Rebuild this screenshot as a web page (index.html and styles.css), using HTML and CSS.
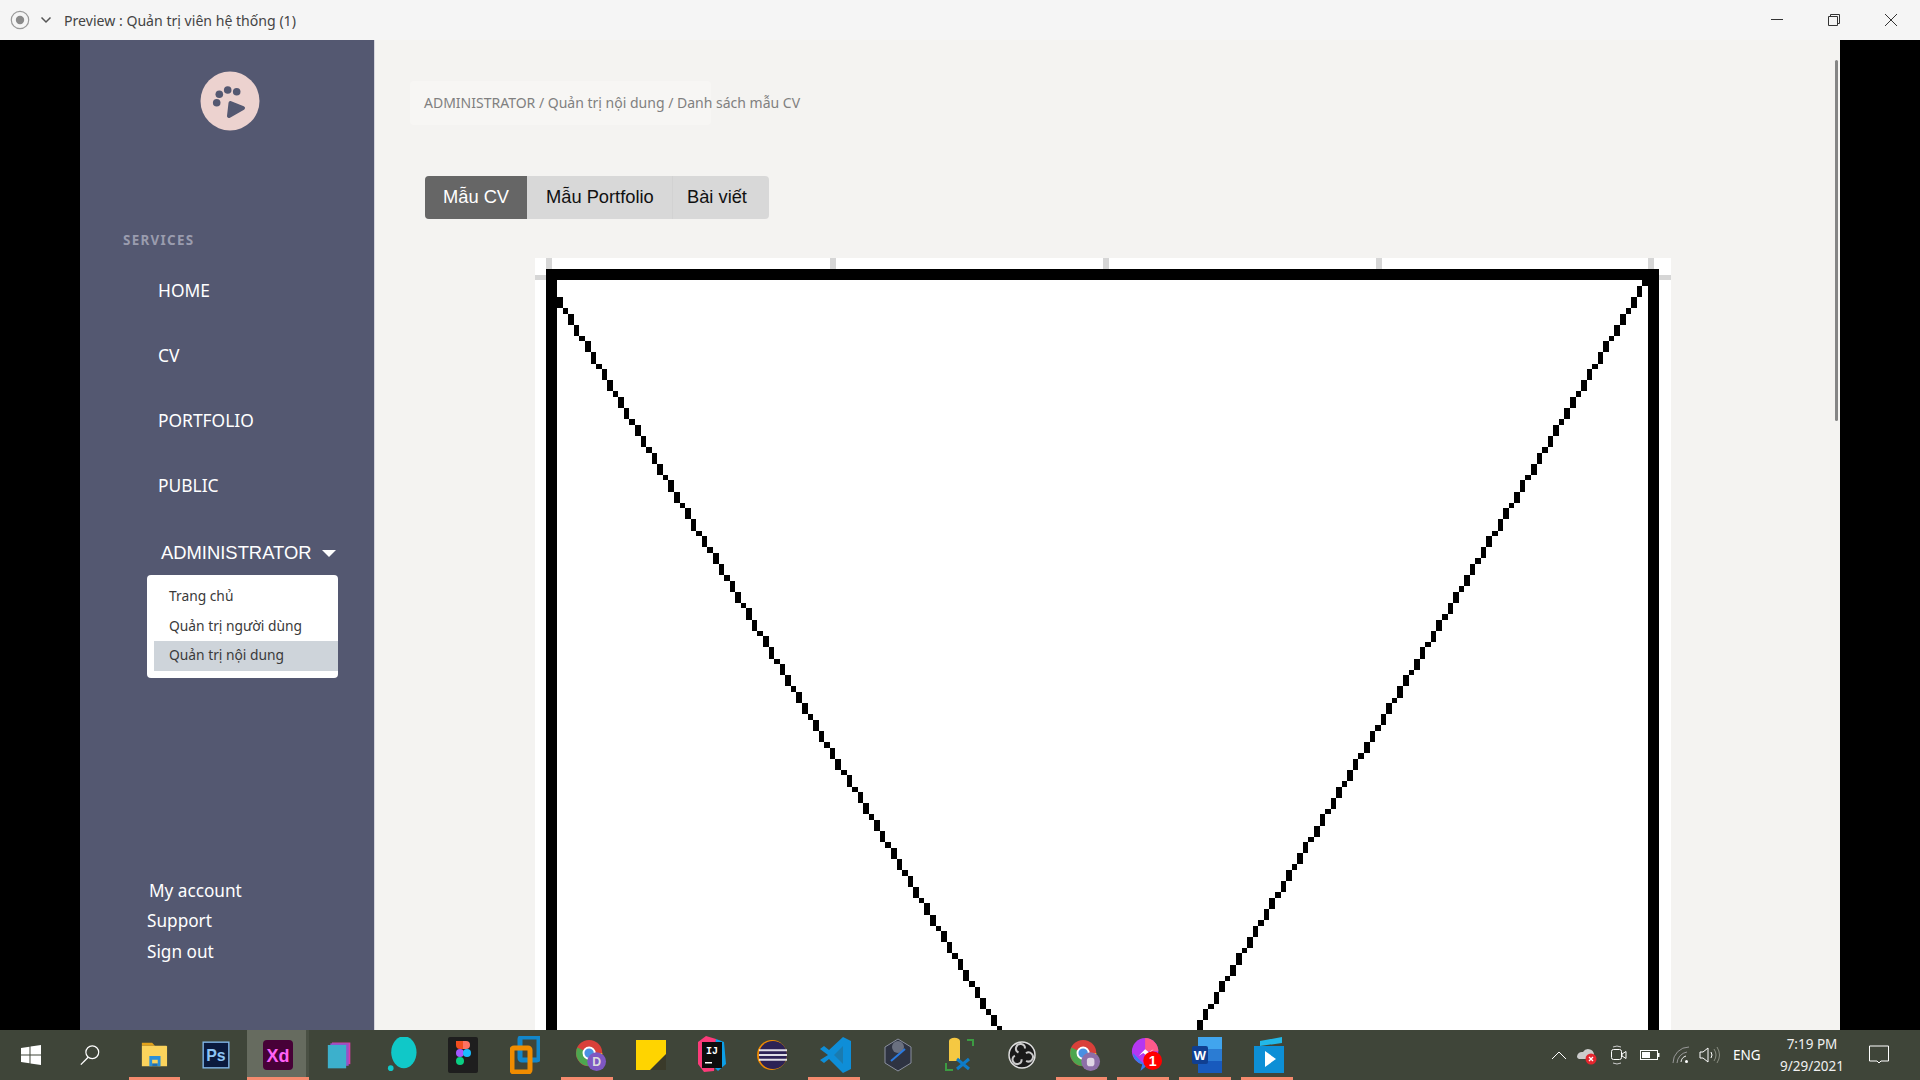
FILE: index.html
```html
<!DOCTYPE html>
<html lang="vi">
<head>
<meta charset="utf-8">
<title>Preview : Quản trị viên hệ thống (1)</title>
<link rel="stylesheet" href="styles.css">
</head>
<body>
<div class="screen">
  <header class="titlebar">
    <svg class="rec" width="20" height="20" viewBox="0 0 20 20"><circle cx="10" cy="10" r="8.7" fill="none" stroke="#9a9a9a" stroke-width="1.2"/><circle cx="10" cy="10" r="4.2" fill="#8a8a8a"/></svg>
    <svg class="chev" width="12" height="8" viewBox="0 0 12 8"><path d="M1.5 1.5 6 6l4.5-4.5" fill="none" stroke="#555" stroke-width="1.5"/></svg>
    <span class="title">Preview : Quản trị viên hệ thống (1)</span>
    <div class="winctl">
      <span class="winbtn"><svg width="14" height="14" viewBox="0 0 14 14"><path d="M1 6.5h12" stroke="#333" stroke-width="1"/></svg></span>
      <span class="winbtn"><svg width="14" height="14" viewBox="0 0 14 14"><path d="M1.5 3.5h9v9h-9zM3.5 3.5v-2h9v9h-2" fill="none" stroke="#333" stroke-width="1"/></svg></span>
      <span class="winbtn"><svg width="14" height="14" viewBox="0 0 14 14"><path d="M1 1l12 12M13 1 1 13" stroke="#333" stroke-width="1"/></svg></span>
    </div>
  </header>

  <div class="stage">
    <aside class="sidebar">
      <div class="logo">
        <svg width="60" height="60" viewBox="0 0 60 60"><circle cx="30" cy="30" r="29.5" fill="#ecd2cf"/><g fill="#545871"><circle cx="19.3" cy="23.3" r="3.8"/><circle cx="27.7" cy="19" r="3.8"/><circle cx="36.7" cy="20.7" r="3.8"/><circle cx="16.7" cy="31.7" r="3.8"/><path d="M30.5 32 43 37 29 45z" stroke="#545871" stroke-width="4" stroke-linejoin="round"/></g></svg>
      </div>
      <div class="services">SERVICES</div>
      <nav class="nav">
        <a class="nav-item">HOME</a>
        <a class="nav-item">CV</a>
        <a class="nav-item">PORTFOLIO</a>
        <a class="nav-item">PUBLIC</a>
      </nav>
      <div class="admin">ADMINISTRATOR<span class="caret"></span></div>
      <div class="dropdown">
        <div class="dd-item">Trang chủ</div>
        <div class="dd-item">Quản trị người dùng</div>
        <div class="dd-item dd-active">Quản trị nội dung</div>
      </div>
      <div class="account">
        <a class="acc-item acc-first">My account</a>
        <a class="acc-item">Support</a>
        <a class="acc-item">Sign out</a>
      </div>
    </aside>

    <main class="content">
      <div class="crumb"><span class="crumb-text">ADMINISTRATOR / Quản trị nội dung / Danh sách mẫu CV</span></div>
      <div class="tabs">
        <span class="tab tab-active">Mẫu CV</span>
        <span class="tab tab-mid">Mẫu Portfolio</span>
        <span class="tab tab-last">Bài viết</span>
      </div>
      <svg class="plot" width="1136" height="1000" viewBox="0 0 1136 1000">
        <rect width="1136" height="1000" fill="#fff"/>
        <g fill="#d6d6d6">
          <rect x="11" y="0" width="6" height="11"/><rect x="295" y="0" width="6" height="11"/><rect x="568" y="0" width="6" height="11"/><rect x="841" y="0" width="6" height="11"/><rect x="1113" y="0" width="6" height="11"/>
          <rect x="0" y="17" width="11" height="5"/><rect x="1124" y="17" width="12" height="5"/>
        </g>
        <g transform="translate(11 11) scale(5.565)" shape-rendering="crispEdges">
          <rect x="1" y="1" width="198" height="298" fill="none" stroke="#000" stroke-width="2"/>
          <path fill="none" stroke="#000" stroke-width="1" d="M2.5 5v2m1 0v1m1 0v2m1 0v2m1 0v1m1 0v2m1 0v2m1 0v1m1 0v2m1 0v2m1 0v1m1 0v2m1 0v2m1 0v1m1 0v2m1 0v2m1 0v1m1 0v2m1 0v2m1 0v1m1 0v2m1 0v2m1 0v1m1 0v2m1 0v2m1 0v1m1 0v2m1 0v1m1 0v2m1 0v2m1 0v1m1 0v2m1 0v2m1 0v1m1 0v2m1 0v2m1 0v1m1 0v2m1 0v2m1 0v1m1 0v2m1 0v2m1 0v1m1 0v2m1 0v2m1 0v1m1 0v2m1 0v2m1 0v1m1 0v2m1 0v2m1 0v1m1 0v2m1 0v1m1 0v2m1 0v2m1 0v1m1 0v2m1 0v2m1 0v1m1 0v2m1 0v2m1 0v1m1 0v2m1 0v2m1 0v1m1 0v2m1 0v2m1 0v1m1 0v2m1 0v2m1 0v1m1 0v2m1 0v2m1 0v1m1 0v2m1 0v2m1 0v1m1 0v2m1 0v1m1 0v2m1 0v2m1 0v1m1 0v2"/>
          <path fill="none" stroke="#000" stroke-width="1" d="M197.5 2v1m-1 0v2m-1 0v2m-1 0v1m-1 0v2m-1 0v2m-1 0v1m-1 0v2m-1 0v2m-1 0v1m-1 0v2m-1 0v2m-1 0v1m-1 0v2m-1 0v2m-1 0v1m-1 0v2m-1 0v2m-1 0v1m-1 0v2m-1 0v2m-1 0v1m-1 0v2m-1 0v2m-1 0v1m-1 0v2m-1 0v2m-1 0v1m-1 0v2m-1 0v2m-1 0v1m-1 0v2m-1 0v2m-1 0v1m-1 0v2m-1 0v2m-1 0v1m-1 0v2m-1 0v2m-1 0v1m-1 0v2m-1 0v2m-1 0v1m-1 0v2m-1 0v2m-1 0v1m-1 0v2m-1 0v2m-1 0v1m-1 0v2m-1 0v2m-1 0v1m-1 0v2m-1 0v2m-1 0v1m-1 0v2m-1 0v2m-1 0v1m-1 0v2m-1 0v2m-1 0v1m-1 0v2m-1 0v2m-1 0v1m-1 0v2m-1 0v2m-1 0v1m-1 0v2m-1 0v2m-1 0v1m-1 0v2m-1 0v2m-1 0v1m-1 0v2m-1 0v2m-1 0v1m-1 0v2m-1 0v2m-1 0v1m-1 0v2m-1 0v2m-1 0v1m-1 0v2m-1 0v2m-1 0v1m-1 0v2m-1 0v2m-1 0v1m-1 0v2m-1 0v2m-1 0v1"/>
        </g>
      </svg>
      <div class="scroll-thumb"></div>
    </main>
  </div>

  <footer class="taskbar">
    <div class="apps">
      <span class="app"><svg width="22" height="22" viewBox="0 0 22 22"><path fill="#fff" d="M1 4l8.5-1.2V10.500H1zM10.500 2.600 21 1v9.500H10.500zM1 11.500h8.500v7.700L1 18zM10.500 11.500H21V21l-10.500-1.500z"/></svg></span>
      <span class="app app-search"><svg width="22" height="24" viewBox="0 0 24 24"><circle cx="14.500" cy="9" r="7" fill="none" stroke="#fff" stroke-width="1.300"/><path d="M10 14.500 2 22.500" stroke="#fff" stroke-width="1.500"/></svg></span>
      <span class="app app-run"><svg width="28" height="28" viewBox="0 0 30 30"><path fill="#e2a21b" d="M2 2h11l3 3h-14z"/><path fill="#fbd35c" d="M2 5h26a1 1 0 0 1 1 1v21H2z"/><path fill="#2a8fd8" d="M10 16h12v11h-3v-7h-6v7h-3z"/><path fill="#1e6fb0" d="M13 24h6v3h-6z"/></svg></span>
      <span class="app"><svg width="28" height="28" viewBox="0 0 30 30"><rect x=".5" y=".5" width="29" height="29" fill="#7fb5e6"/><rect x="2" y="2" width="26" height="26" fill="#0a1a3e"/><text class="ic-text ps" x="15" y="21" text-anchor="middle">Ps</text></svg></span>
      <span class="app app-run app-active"><svg width="30" height="30" viewBox="0 0 30 30"><rect width="30" height="30" rx="4" fill="#470137"/><text class="ic-text xd" x="15" y="22" text-anchor="middle">Xd</text></svg></span>
      <span class="app"><svg width="25" height="32" viewBox="0 0 30 32"><path fill="#d63fa8" d="M6 1h22v26H6z"/><path fill="#9255c9" d="M4 2h22v27H4z"/><path fill="#3cb0cc" d="M1 4h22v28H1z"/></svg></span>
      <span class="app"><svg width="30" height="36" viewBox="0 0 32 38"><ellipse cx="18" cy="16" rx="13.500" ry="17" fill="#10c8c8"/><circle cx="4" cy="33" r="3" fill="#10c8c8"/></svg></span>
      <span class="app"><svg width="30" height="36" viewBox="0 0 30 36"><rect y="0" width="30" height="36" rx="2" fill="#1e1e1e"/><path fill="#f24e1e" d="M8 4h7v8H12a4 4 0 0 1-4-4z"/><path fill="#ff7262" d="M15 4h3a4 4 0 0 1 0 8h-3z"/><circle cx="12" cy="16" r="4" fill="#a259ff"/><circle cx="19" cy="16" r="4" fill="#1abcfe"/><circle cx="12" cy="24" r="4" fill="#0acf83"/></svg></span>
      <span class="app"><svg width="30" height="38" viewBox="0 0 30 38"><rect x="10" y="1" width="19" height="23" rx="2" fill="none" stroke="#1287cc" stroke-width="5"/><rect x="2" y="12" width="18" height="24" rx="2" fill="none" stroke="#f08c00" stroke-width="5"/></svg></span>
      <span class="app app-run app-shift"><svg width="32" height="36" viewBox="0 0 34 38"><circle cx="15" cy="17" r="14" fill="#d9403a"/><path fill="#4da64f" d="M15 17 2.500 11A14 14 0 0 0 15 31z"/><path fill="#f5c518" d="M15 17H29A14 14 0 0 1 15 31z"/><circle cx="15" cy="17" r="6" fill="#4a90e2" stroke="#fff" stroke-width="2"/><circle cx="23" cy="26" r="10" fill="#7e57c2"/><text class="ic-text badge-d" x="23" y="31" text-anchor="middle">D</text></svg></span>
      <span class="app app-nudge"><svg width="30" height="30" viewBox="0 0 30 30"><path fill="#ffd400" d="M0 0h30v18L18 30H0z"/><path fill="#3a3a2a" d="M30 14v16H14z"/></svg></span>
      <span class="app"><svg width="30" height="38" viewBox="0 0 30 38"><path fill="#fc3b7a" d="M2 6 10 0l10 3-2 32-10 1-6-8z"/><path fill="#0c9fe8" d="M20 3l8 3 2 22-8 7-6-6z"/><rect x="6" y="6" width="20" height="26" fill="#0d0d0d"/><text class="ic-text ij" x="16" y="18" text-anchor="middle">IJ</text><rect x="9" y="26" width="7" height="1.500" fill="#fff"/></svg></span>
      <span class="app"><svg width="30" height="32" viewBox="0 0 32 34"><circle cx="16" cy="17" r="16" fill="#f08a00"/><circle cx="17" cy="17" r="15" fill="#2c2255"/><path d="M2 12h30M2 17h30M2 22h30" stroke="#fff" stroke-width="2.200" opacity=".85"/></svg></span>
      <span class="app app-run app-nudge"><svg width="32" height="38" viewBox="0 0 32 38"><path fill="#0e8ed8" d="M23 1 31 5v28l-8 4L9 23l-5 4-4-3 8-5-8-6 4-3 5 4z"/><path fill="#3f4539" opacity=".25" d="M23 10v18l-9-9z"/></svg></span>
      <span class="app app-nudge"><svg width="30" height="34" viewBox="0 0 30 34"><path fill="#2e3342" stroke="#8a8f9e" stroke-width="1" d="M15 1 28 9v16l-13 8-13-8V9z"/><circle cx="15" cy="9" r="6" fill="#6a7080"/><path d="M8 23 22 11" stroke="#2a7ae0" stroke-width="2"/></svg></span>
      <span class="app app-nudge"><svg width="30" height="36" viewBox="0 0 30 36"><path fill="#f5c842" d="M4 4a5 3 0 0 1 11 0v20H4z"/><path d="M1 26v7h7M22 3h6v6" fill="none" stroke="#3c9b42" stroke-width="2"/><path d="M12 22l12 10M24 22 12 32" stroke="#0e7cc8" stroke-width="3"/></svg></span>
      <span class="app app-nudge"><svg width="28" height="28" viewBox="0 0 28 28"><circle cx="14" cy="14" r="13" fill="#1a1a1a" stroke="#ddd" stroke-width="1.500"/><g fill="none" stroke="#c8c8c8" stroke-width="2"><path d="M17 7.500a4.500 4.500 0 1 0-6.500 4"/><path d="M17 7.500a4.500 4.500 0 1 0-6.500 4" transform="rotate(120 14 14)"/><path d="M17 7.500a4.500 4.500 0 1 0-6.500 4" transform="rotate(240 14 14)"/></g></svg></span>
      <span class="app app-run app-shift"><svg width="32" height="36" viewBox="0 0 34 38"><circle cx="15" cy="17" r="14" fill="#d9403a"/><path fill="#4da64f" d="M15 17 2.500 11A14 14 0 0 0 15 31z"/><path fill="#f5c518" d="M15 17H29A14 14 0 0 1 15 31z"/><circle cx="15" cy="17" r="6" fill="#4a90e2" stroke="#fff" stroke-width="2"/><circle cx="23" cy="26" r="10" fill="#8d6fa8"/><rect x="19" y="22" width="8" height="9" rx="3" fill="#e0d7e6"/></svg></span>
      <span class="app app-run app-shift"><svg width="32" height="36" viewBox="0 0 34 38"><circle cx="15" cy="15" r="14" fill="#b537f2"/><path fill="#3a7bf0" d="M2 17a14 14 0 0 0 10 12l-2 7 6-5z"/><path fill="#ff5a8a" d="M15 1a14 14 0 0 1 14 14H15z"/><path fill="#fff" d="M8 20l7-7 4 3 5-3-7 7-4-3z"/><circle cx="23" cy="25" r="10" fill="#f00"/><text class="ic-text badge-one" x="23" y="31" text-anchor="middle">1</text></svg></span>
      <span class="app app-run app-nudge"><svg width="30" height="36" viewBox="0 0 30 36"><rect x="6" y="0" width="24" height="12" fill="#41a5ee"/><rect x="6" y="12" width="24" height="12" fill="#2b7cd3"/><rect x="6" y="24" width="24" height="12" fill="#185abd"/><rect x="0" y="9" width="16" height="18" rx="2" fill="#103f91"/><text class="ic-text word" x="8" y="23" text-anchor="middle">W</text></svg></span>
      <span class="app app-run app-nudge"><svg width="30" height="36" viewBox="0 0 30 36"><path fill="#22b8e8" d="M6 4 28 0v6L6 9z"/><path fill="#0d8fd6" d="M0 9h30v27H0z"/><path fill="#fff" d="M11 14l11 8-11 8z"/></svg></span>
    </div>
    <div class="tray">
      <span class="tray-i tw-chev"><svg width="16" height="10" viewBox="0 0 16 10"><path d="M1 9l7-7 7 7" fill="none" stroke="#fff" stroke-width="1"/></svg></span>
      <span class="tray-i tw-cloud"><svg width="22" height="20" viewBox="0 0 22 20"><path fill="#ccc" d="M1 12a5 5 0 0 1 6-5 6 6 0 0 1 11 2v5H3a3 3 0 0 1-2-2z"/><circle cx="15" cy="14" r="5.500" fill="#e3262e"/><path d="M13 12l4 4M17 12l-4 4" stroke="#fff" stroke-width="1.300"/></svg></span>
      <span class="tray-i tw-cam"><svg width="16" height="20" viewBox="0 0 16 20"><rect x=".5" y="4.500" width="10" height="10" rx="2" fill="none" stroke="#fff"/><path d="M11 9l4-2.500v7L11 11z" fill="none" stroke="#fff"/><path d="M2 2q4-2 8 0M2 18q4 2 8 0" fill="none" stroke="#ccc"/></svg></span>
      <span class="tray-i tw-bat"><svg width="20" height="12" viewBox="0 0 20 12"><rect x=".5" y="1.500" width="17" height="9" fill="none" stroke="#fff"/><rect x="2" y="3" width="8" height="6" fill="#fff"/><rect x="18" y="4" width="1.500" height="4" fill="#fff"/></svg></span>
      <span class="tray-i tw-wifi"><svg width="18" height="18" viewBox="0 0 18 18"><path d="M1 17A16 16 0 0 1 17 1M5 17A12 12 0 0 1 15 6" fill="none" stroke="#999" stroke-width="1"/><path d="M9 16a7 7 0 0 1 5-6" fill="none" stroke="#eee" stroke-width="1"/><circle cx="14.500" cy="15.500" r="1.500" fill="#fff"/></svg></span>
      <span class="tray-i tw-vol"><svg width="22" height="18" viewBox="0 0 22 18"><path d="M1 6h3l5-4v14l-5-4H1z" fill="none" stroke="#fff"/><path d="M12 6q2 3 0 6" fill="none" stroke="#fff"/><path d="M15 3q4 6 0 12M18 1q5 8 0 16" fill="none" stroke="#8a8e82"/></svg></span>
      <span class="lang">ENG</span>
      <span class="clock"><span>7:19 PM</span><span>9/29/2021</span></span>
      <span class="tray-i tw-note"><svg width="20" height="20" viewBox="0 0 20 20"><path d="M.5 1h19v15H12l-2 2-2-2H.5z" fill="none" stroke="#fff"/></svg></span>
    </div>
  </footer>
</div>
</body>
</html>
```

FILE: styles.css
```css
* { box-sizing: border-box; }
html, body { margin: 0; padding: 0; height: 100%; overflow: hidden; background: #000; }
.screen { width: 1920px; height: 1080px; display: flex; flex-direction: column; font-family: "Noto Sans", sans-serif; }

.titlebar { height: 40px; flex: none; background: #f5f5f5; display: flex; align-items: center; padding-left: 10px; }
.chev { margin-left: 10px; }
.title { margin-left: 12px; font-size: 14.100px; color: #444; }
.winctl { margin-left: auto; margin-right: 1px; display: flex; }
.winbtn { width: 57px; display: flex; justify-content: center; }

.stage { flex: 1; min-height: 0; display: flex; padding: 0 80px; overflow: hidden; background: #000; }

.sidebar { width: 295px; flex: none; background: #545871; border-right: 1px solid #d5d5dc; display: flex; flex-direction: column; color: #fff; }
.logo { height: 91px; padding: 31px 0 0 120px; }
.logo svg { display: block; }
.services { margin: 100px 0 0 43px; font-size: 13.400px; font-weight: 700; letter-spacing: 1.300px; color: #9a9cae; line-height: 18px; }
.nav { display: flex; flex-direction: column; margin-top: 22px; }
.nav-item { padding-left: 78px; height: 65px; font-size: 17.400px; line-height: 38px; color: #fff; }
.admin { margin: 9px 0 0 81px; font-family: "Liberation Sans", sans-serif; font-size: 18.400px; line-height: 26px; display: flex; align-items: center; color: #fff; }
.caret { width: 0; height: 0; margin-left: 10px; border: 7px solid transparent; border-top-color: #fff; border-bottom-width: 0; }
.dropdown { width: 191px; margin: 9px 0 0 67px; background: #fff; border-radius: 4px; padding: 7px 0 7px 7px; color: #3a3a3a; }
.dd-item { height: 29.500px; font-size: 13.800px; line-height: 28px; padding-left: 15px; }
.dd-active { background: #ced4da; }
.account { margin-top: auto; padding-bottom: 63px; display: flex; flex-direction: column; }
.acc-item { font-size: 17.200px; line-height: 30.500px; padding-left: 67px; color: #fff; }
.acc-first { padding-left: 69px; }

.content { flex: 1; min-width: 0; position: relative; background: #f4f3f1; padding: 41px 0 0 35px; overflow: hidden; }
.crumb { width: 301px; height: 44px; background: #f7f6f4; border-radius: 4px; padding-left: 14px; line-height: 42px; white-space: nowrap; }
.crumb-text { font-size: 14px; color: #808080; }
.tabs { display: inline-flex; margin: 51px 0 0 15px; height: 43px; font-family: "Liberation Sans", sans-serif; font-size: 18.300px; line-height: 42px; border-radius: 4px; overflow: hidden; background: #d8d8d8; color: #111; vertical-align: top; }
.tab { padding-left: 18px; }
.tab-active { background: #666; color: #fff; width: 102px; }
.tab-mid { border-right: 1px solid #d2d2d2; width: 146px; padding-left: 19px; }
.tab-last { width: 96px; padding-left: 14px; }
.plot { display: block; margin: 39px 0 0 125px; }
.scroll-thumb { position: absolute; left: 1460px; top: 20px; width: 3px; height: 361px; background: #858585; border-radius: 2px; }

.taskbar { height: 50px; flex: none; background: #3f4539; display: flex; align-items: stretch; }
.apps { display: flex; }
.app { width: 61.800px; height: 50px; display: flex; align-items: center; justify-content: center; position: relative; flex: none; }
.app-search { padding-right: 5px; }
.app-shift { padding-left: 7px; }
.app-nudge { padding-left: 4px; }
.app-run::after { content: ""; position: absolute; left: 5px; right: 5px; bottom: 0; height: 3px; background: #f58a6e; }
.app-active { background: #666b5f; box-shadow: inset -3px 0 0 #4a5044; }
.app-active::after { left: 0; right: 0; }
.ic-text { font-family: "Liberation Sans", sans-serif; font-weight: 700; }
.ps { font-size: 17px; fill: #8ec5f5; }
.xd { font-size: 18px; fill: #ff61f6; }
.ij { font-size: 10px; fill: #fff; font-family: "Liberation Mono", monospace; }
.badge-d { font-size: 13px; fill: #ddd; }
.badge-one { font-size: 15px; fill: #fff; }
.word { font-size: 13px; fill: #fff; }

.tray { margin-left: auto; display: flex; align-items: center; color: #fff; }
.tray-i { display: flex; justify-content: center; align-items: center; }
.tw-chev { width: 16px; }
.tw-cloud { width: 22px; margin-left: 9px; }
.tw-cam { width: 16px; margin-left: 13px; }
.tw-bat { width: 20px; margin-left: 13px; }
.tw-wifi { width: 18px; margin-left: 12px; }
.tw-vol { width: 22px; margin-left: 9px; }
.lang { margin-left: 12px; font-size: 13.500px; width: 29px; }
.clock { width: 100px; display: flex; flex-direction: column; align-items: center; font-size: 13.500px; line-height: 22px; color: #f0f0f0; }
.tw-note { width: 20px; margin: 0 31px 0 7px; }
```
